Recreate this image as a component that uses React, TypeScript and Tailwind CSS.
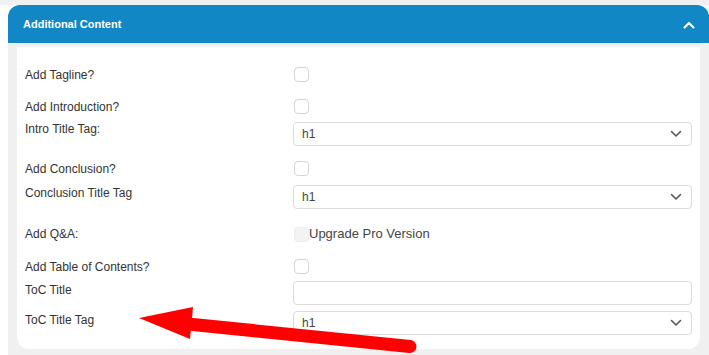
import { ReactNode } from "react";

function Checkbox({ disabled = false }: { disabled?: boolean }) {
  return (
    <div
      className={`h-[15px] w-[15px] rounded-[4px] border ${
        disabled ? "border-[#eeeeee] bg-[#f3f3f3]" : "border-[#d6d6d6] bg-white"
      }`}
    />
  );
}

function Select({ value = "h1" }: { value?: string }) {
  return (
    <div className="flex h-[24px] w-full items-center justify-between rounded-[4px] border border-[#dcdcdc] bg-white pl-[8px] pr-[9px]">
      <span className="text-[12px] text-[#444]">{value}</span>
      <svg width="12" height="8" viewBox="0 0 12 8" fill="none">
        <path d="M1.5 1.5 L6 6 L10.5 1.5" stroke="#555" strokeWidth="1.6" strokeLinecap="round" strokeLinejoin="round" />
      </svg>
    </div>
  );
}

function Row({
  label,
  control,
  mt,
  labelPt,
  center = false,
}: {
  label: string;
  control: ReactNode;
  mt: string;
  labelPt?: string;
  center?: boolean;
}) {
  return (
    <div className={`flex ${center ? "items-center" : "items-start"} ${mt}`}>
      <div className={`w-[268px] shrink-0 text-[12px] leading-[14px] text-[#333] ${labelPt ?? ""}`}>{label}</div>
      <div className="flex flex-1 items-center">{control}</div>
    </div>
  );
}

export default function App() {
  return (
    <div className="relative h-[355px] w-[709px] overflow-hidden bg-white font-['Liberation_Sans',Arial,sans-serif]">
      <div className="h-[5px] bg-[#f0f0f0]" />
      <div className="ml-[8px]">
        <div className="flex h-[38px] items-center justify-between rounded-t-[12px] bg-[#1188c5] pl-[15px] pr-[14px]">
          <span className="text-[11px] font-bold text-white">Additional Content</span>
          <svg width="12" height="8" viewBox="0 0 12 8" fill="none" className="mt-[2px]">
            <path d="M1.5 6.5 L6 2 L10.5 6.5" stroke="white" strokeWidth="2" strokeLinecap="round" strokeLinejoin="round" />
          </svg>
        </div>
        <div className="bg-[#f0f0f0] pl-[9px] pr-[9px] pb-[6px] pt-[4px]">
          <div className="rounded-b-[12px] bg-white pb-[14px] pl-[8px] pr-[8px] pt-[20px]">
            <Row center mt="mt-0" label="Add Tagline?" control={<div className="pl-[1px]"><Checkbox /></div>} />
            <Row center mt="mt-[17px]" label="Add Introduction?" control={<div className="pl-[1px]"><Checkbox /></div>} />
            <Row mt="mt-[8px]" labelPt="pt-0" label="Intro Title Tag:" control={<Select />} />
            <Row center mt="mt-[15px]" label="Add Conclusion?" control={<div className="pl-[1px]"><Checkbox /></div>} />
            <Row mt="mt-[9px]" labelPt="pt-[1px]" label="Conclusion Title Tag" control={<Select />} />
            <Row
              center
              mt="mt-[17px]"
              label="Add Q&A:"
              control={
                <div className="flex items-center pl-[1px]">
                  <Checkbox disabled />
                  <span className="text-[13px] leading-[16px] text-[#444]">Upgrade Pro Version</span>
                </div>
              }
            />
            <Row center mt="mt-[17px]" label="Add Table of Contents?" control={<div className="pl-[1px]"><Checkbox /></div>} />
            <Row
              mt="mt-[7px]"
              labelPt="pt-[2px]"
              label="ToC Title"
              control={<div className="h-[24px] w-full rounded-[4px] border border-[#dcdcdc] bg-white" />}
            />
            <Row mt="mt-[6px]" labelPt="pt-[2px]" label="ToC Title Tag" control={<Select />} />
          </div>
        </div>
      </div>
      <svg className="pointer-events-none absolute left-0 top-0" width="709" height="355" viewBox="0 0 709 355">
        <line x1="188" y1="324" x2="410" y2="346.5" stroke="#ff0000" strokeWidth="13" strokeLinecap="round" />
        <polygon points="139,318 193,307 190,339" fill="#ff0000" />
      </svg>
    </div>
  );
}
